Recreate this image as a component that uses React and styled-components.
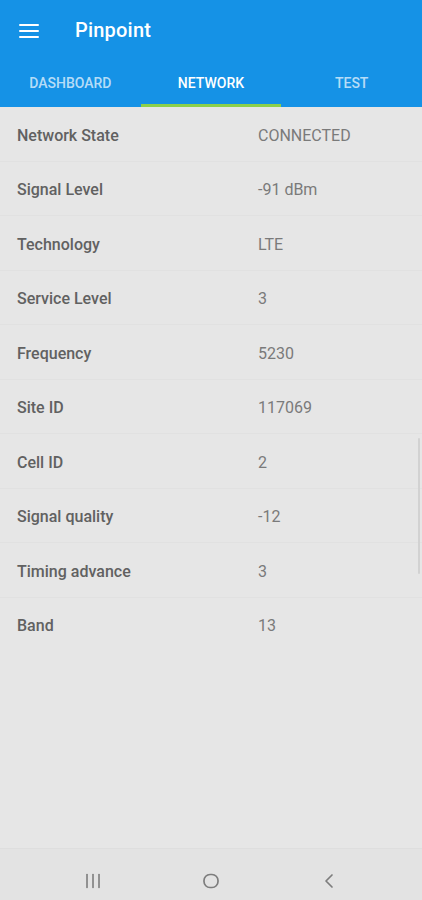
import React from 'react';
import styled, { createGlobalStyle } from 'styled-components';

const GlobalStyle = createGlobalStyle`
  html, body {
    margin: 0;
    padding: 0;
    background: #e6e6e6;
    font-family: Roboto, "Noto Sans", sans-serif;
  }
`;

const Screen = styled.div`
  width: 422px;
  height: 900px;
  display: flex;
  flex-direction: column;
  background: #e6e6e6;
  overflow: hidden;
`;

const AppBar = styled.header`
  background: #1592e6;
  color: #fff;
`;

const Toolbar = styled.div`
  height: 59px;
  display: flex;
  align-items: center;
  padding-left: 19px;
`;

const MenuButton = styled.div`
  width: 20px;
  height: 14px;
  display: flex;
  flex-direction: column;
  justify-content: space-between;
  margin-top: 2px;

  span {
    display: block;
    height: 2px;
    background: #fff;
    border-radius: 1px;
  }
`;

const Title = styled.h1`
  margin: 0 0 0 36px;
  font-size: 20px;
  font-weight: 500;
  letter-spacing: 0.2px;
`;

const Tabs = styled.nav`
  display: grid;
  grid-template-columns: repeat(3, 1fr);
  height: 48px;
`;

const Tab = styled.div`
  display: flex;
  align-items: center;
  justify-content: center;
  font-size: 14px;
  font-weight: 500;
  text-transform: uppercase;
  color: ${(p) => (p.$active ? '#ffffff' : 'rgba(255,255,255,0.7)')};
  border-bottom: 3px solid ${(p) => (p.$active ? '#8cd04a' : 'transparent')};
  padding-top: 3px;
`;

const Content = styled.main`
  flex: 1;
  position: relative;
`;

const Row = styled.div`
  height: 54.5px;
  box-sizing: border-box;
  display: grid;
  grid-template-columns: 241px 1fr;
  align-items: center;
  padding: 3px 0 0 17px;
  border-bottom: 1px solid ${(p) => (p.$last ? 'transparent' : '#e1e1e1')};
  font-size: 16px;
`;

const Label = styled.span`
  font-weight: 500;
  color: #616161;
`;

const Value = styled.span`
  color: #7a7a7a;
`;

const ScrollThumb = styled.div`
  position: absolute;
  right: 2px;
  top: 331px;
  width: 2px;
  height: 136px;
  background: #d2d2d2;
  border-radius: 1px;
`;

const NavBar = styled.footer`
  height: 52px;
  box-sizing: border-box;
  padding-top: 12px;
  display: flex;
  align-items: center;
  justify-content: center;
  gap: 78px;
  background: #e3e3e3;
  border-top: 1px solid #dedede;
  color: #7d7d7d;
`;

const NavButton = styled.div`
  width: 40px;
  display: flex;
  justify-content: center;
`;

const rows = [
  ['Network State', 'CONNECTED'],
  ['Signal Level', '-91 dBm'],
  ['Technology', 'LTE'],
  ['Service Level', '3'],
  ['Frequency', '5230'],
  ['Site ID', '117069'],
  ['Cell ID', '2'],
  ['Signal quality', '-12'],
  ['Timing advance', '3'],
  ['Band', '13'],
];

function App() {
  return (
    <Screen>
      <GlobalStyle />
      <AppBar>
        <Toolbar>
          <MenuButton>
            <span />
            <span />
            <span />
          </MenuButton>
          <Title>Pinpoint</Title>
        </Toolbar>
        <Tabs>
          <Tab>Dashboard</Tab>
          <Tab $active>Network</Tab>
          <Tab>Test</Tab>
        </Tabs>
      </AppBar>
      <Content>
        {rows.map(([label, value], i) => (
          <Row key={label} $last={i === rows.length - 1}>
            <Label>{label}</Label>
            <Value>{value}</Value>
          </Row>
        ))}
        <ScrollThumb />
      </Content>
      <NavBar>
        <NavButton>
          <svg width="18" height="16" viewBox="0 0 18 16">
            <g stroke="currentColor" strokeWidth="1.6" strokeLinecap="round">
              <line x1="3" y1="1.5" x2="3" y2="14.5" />
              <line x1="9" y1="1.5" x2="9" y2="14.5" />
              <line x1="15" y1="1.5" x2="15" y2="14.5" />
            </g>
          </svg>
        </NavButton>
        <NavButton>
          <svg width="18" height="18" viewBox="0 0 18 18">
            <rect x="2" y="2.5" width="14" height="13" rx="6" fill="none" stroke="currentColor" strokeWidth="1.7" />
          </svg>
        </NavButton>
        <NavButton>
          <svg width="14" height="18" viewBox="0 0 14 18">
            <polyline points="10,3 4,9 10,15" fill="none" stroke="currentColor" strokeWidth="1.7" strokeLinecap="round" strokeLinejoin="round" />
          </svg>
        </NavButton>
      </NavBar>
    </Screen>
  );
}

export default App;
